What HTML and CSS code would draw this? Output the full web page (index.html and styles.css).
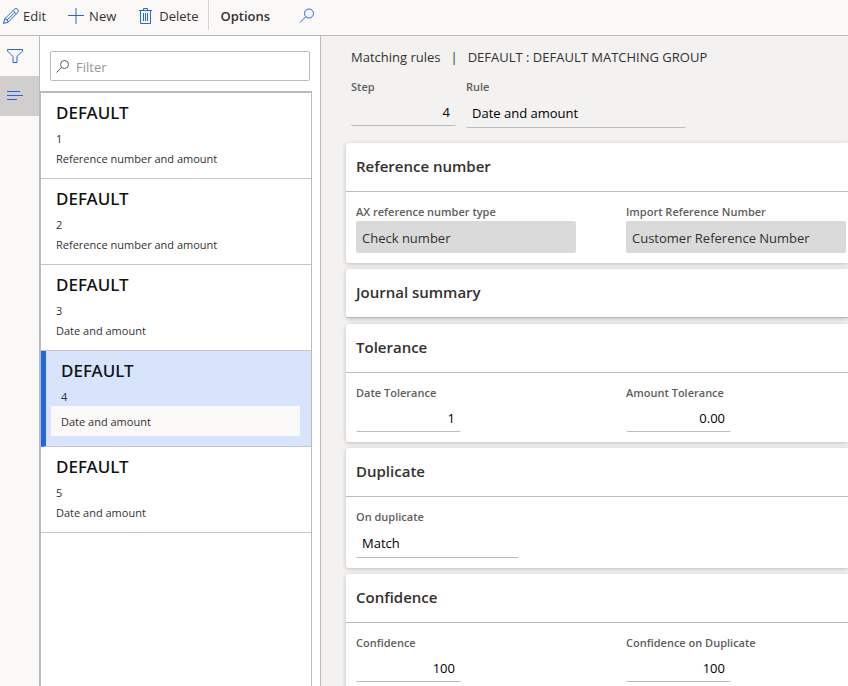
FILE: index.html
```html
<!DOCTYPE html>
<html lang="en">
<head>
<meta charset="utf-8">
<title>Matching rules</title>
<link rel="stylesheet" href="styles.css">
</head>
<body>
<div class="app">
  <header class="toolbar">
    <button class="tool edit" type="button">
      <svg width="18" height="18" viewBox="0 0 18 18"><path d="M1.500 16.500 2.800 11.800 12.300 2.300a2.200 2.200 0 0 1 3.400 3.200L6.200 15.200ZM2.800 11.800c2 .1 3.200 1.300 3.400 3.400M11 3.600l3.300 3.300M13 5.300 4.500 13.500"/></svg>
      <span>Edit</span>
    </button>
    <button class="tool new" type="button">
      <svg width="16" height="16" viewBox="0 0 16 16"><path d="M8 0v16M0 7.500h16"/></svg>
      <span>New</span>
    </button>
    <button class="tool delete" type="button">
      <svg width="13" height="16" viewBox="0 0 13 16"><path d="M0 2.500h13M4.500 2.500v-2h4v2M1.500 2.500v13h10v-13M4.500 5v8M6.500 5v8M8.500 5v8"/></svg>
      <span>Delete</span>
    </button>
    <button class="tool options" type="button">Options</button>
    <button class="tool search" type="button" aria-label="Search">
      <svg width="16" height="16" viewBox="0 0 16 16"><circle cx="10" cy="5.500" r="4.500"/><path d="M6.800 8.700 1 14.500"/></svg>
    </button>
  </header>
  <div class="workspace">
    <nav class="rail">
      <button class="rail-button" type="button" aria-label="Show filters">
        <svg width="16" height="16" viewBox="0 0 16 16"><path d="M.5 1.500h15v1.500l-5.500 5.500v6h-4v-6L.5 3Z"/></svg>
      </button>
      <button class="rail-button selected" type="button" aria-label="Show list">
        <svg width="16" height="16" viewBox="0 0 16 16"><path d="M0 3.500h13M0 7.500h16M0 11.500h10"/></svg>
      </button>
    </nav>
    <aside class="list-pane">
      <label class="filter">
        <svg width="13" height="13" viewBox="0 0 13 13"><circle cx="8.500" cy="4.500" r="4"/><path d="M5.600 7.400.5 12.500"/></svg>
        <input type="text" placeholder="Filter" aria-label="Filter">
      </label>
      <ul class="rules">
        <li class="rule"><strong>DEFAULT</strong><span>1</span><span>Reference number and amount</span></li>
        <li class="rule"><strong>DEFAULT</strong><span>2</span><span>Reference number and amount</span></li>
        <li class="rule"><strong>DEFAULT</strong><span>3</span><span>Date and amount</span></li>
        <li class="rule current"><strong>DEFAULT</strong><span>4</span><span class="active-field">Date and amount</span></li>
        <li class="rule"><strong>DEFAULT</strong><span>5</span><span>Date and amount</span></li>
      </ul>
    </aside>
    <main class="details">
      <h1 class="caption"><span>Matching rules</span><span class="bar">|</span><span>DEFAULT : DEFAULT MATCHING GROUP</span></h1>
      <div class="key-fields">
        <div class="field number"><label for="step">Step</label><input id="step" type="text" value="4"></div>
        <div class="field"><label for="rule">Rule</label><select id="rule"><option>Date and amount</option><option>Reference number and amount</option></select></div>
      </div>
      <section class="card">
        <h2>Reference number</h2>
        <div class="fields">
          <div class="field"><label for="ax">AX reference number type</label><input id="ax" type="text" value="Check number" readonly></div>
          <div class="field"><label for="import">Import Reference Number</label><input id="import" type="text" value="Customer Reference Number" readonly></div>
        </div>
      </section>
      <section class="card">
        <h2>Journal summary</h2>
      </section>
      <section class="card">
        <h2>Tolerance</h2>
        <div class="fields">
          <div class="field"><label for="date-tol">Date Tolerance</label><input id="date-tol" class="numeric" type="text" value="1"></div>
          <div class="field"><label for="amount-tol">Amount Tolerance</label><input id="amount-tol" class="numeric" type="text" value="0.00"></div>
        </div>
      </section>
      <section class="card">
        <h2>Duplicate</h2>
        <div class="fields">
          <div class="field"><label for="on-dup">On duplicate</label><select id="on-dup" class="short"><option>Match</option></select></div>
        </div>
      </section>
      <section class="card">
        <h2>Confidence</h2>
        <div class="fields">
          <div class="field"><label for="conf">Confidence</label><input id="conf" class="numeric" type="text" value="100"></div>
          <div class="field"><label for="conf-dup">Confidence on Duplicate</label><input id="conf-dup" class="numeric" type="text" value="100"></div>
        </div>
      </section>
    </main>
  </div>
</div>
</body>
</html>
```
FILE: styles.css
```css
* { box-sizing: border-box; }

body {
  margin: 0;
  color: #323130;
  font: 13px/20px "Open Sans", "Noto Sans", sans-serif;
}

button, input, select { font: inherit; color: inherit; }

button {
  padding: 0;
  border: 0;
  background: none;
}

svg {
  flex: none;
  fill: none;
  stroke: #2266e3;
  stroke-width: 1;
}

.app {
  display: flex;
  flex-direction: column;
  height: 100vh;
  overflow: hidden;
}

/* Toolbar */
.toolbar {
  display: flex;
  flex: none;
  align-items: flex-start;
  height: 36px;
  padding-left: 2px;
  border-bottom: 1px solid #bdbbb9;
  background: #faf9f8;
}

.tool {
  display: flex;
  align-items: center;
  height: 30px;
  gap: 5px;
  padding-top: 1px;
}

.edit { gap: 3px; }
.new { margin-left: 22px; }
.delete { gap: 7px; margin-left: 23px; }

.options {
  margin-left: 9px;
  padding-left: 12px;
  border-left: 1px solid #d9d7d5;
  font-weight: 600;
}

.search { margin-left: 29px; }

/* Side rail */
.workspace {
  display: flex;
  flex: 1;
  min-height: 0;
}

.rail {
  display: flex;
  flex: none;
  flex-direction: column;
  width: 40px;
  border-right: 1px solid #bdbbb9;
  background: #faf9f8;
}

.rail-button {
  display: flex;
  align-items: center;
  height: 40px;
  padding-left: 7px;
}

.rail-button.selected { background: #d0cfcd; }

/* Rule list */
.list-pane {
  display: flex;
  flex: none;
  flex-direction: column;
  width: 281px;
  border-right: 1px solid #bdbbb9;
  background: #fff;
}

.filter {
  display: flex;
  align-items: center;
  height: 30px;
  margin: 15px 10px 10px;
  padding-left: 5px;
  gap: 7px;
  border: 1px solid #bdbbb9;
  border-radius: 2px;
}

.filter svg { stroke: #605e5c; }

.filter input {
  width: 100%;
  min-width: 0;
  padding: 2px 0 0;
  border: 0;
  outline: 0;
  background: none;
}

.filter input::placeholder { color: #979593; }

.rules {
  flex: 1;
  margin: 0 8px 0 0;
  padding: 0;
  border: 1px solid #bdbbb9;
  border-width: 2px 1px 0;
  list-style: none;
}

.rule {
  display: flex;
  flex-direction: column;
  padding: 8px 15px 9px;
  border-bottom: 1px solid #c8c6c4;
  font-size: 11px;
}

.rule strong {
  margin-bottom: 4px;
  color: #111;
  font-family: "Noto Sans", "Open Sans", sans-serif;
  font-size: 17px;
  font-weight: 500;
  line-height: 24px;
}

.rule.current {
  padding: 8px 11px 10px 15px;
  border-left: 5px solid #2266e3;
  background: #d8e4fc;
}

.rule .active-field {
  margin-left: -10px;
  padding: 6px 10px 4px;
  background: #faf9f8;
}

.rule.current span:not(.active-field) { line-height: 19px; }

/* Detail form */
.details {
  flex: 1;
  min-width: 0;
  padding: 11px 0 0 25px;
  overflow: auto;
  scrollbar-width: none;
  background: #f3f2f1;
}

.caption {
  display: flex;
  gap: 10px;
  margin: 0 0 10px 5px;
  font-size: 13px;
  font-weight: 400;
}

.key-fields {
  display: flex;
  align-items: flex-start;
  gap: 10px;
  margin: 0 0 15px 5px;
}

.field {
  display: flex;
  flex: none;
  flex-direction: column;
  align-items: flex-start;
  width: 220px;
}

.field.number { width: 105px; }

.field label {
  color: #605e5c;
  font-size: 11px;
  font-weight: 600;
  line-height: 19px;
}

.field input, .field select {
  width: 100%;
  height: 32px;
  padding: 2px 6px 0;
  border: 0;
  border-bottom: 1px solid #bdbbb9;
  border-radius: 2px;
  outline: 0;
  background: none;
  color: #000;
  appearance: none;
}

.field input[readonly] {
  border: 0;
  background: #dadada;
  color: #323130;
}

.field.number input, .field .numeric {
  width: 105px;
  height: 30px;
  text-align: right;
}

.field .short { width: 163px; }

.card {
  margin-bottom: 6px;
  border-radius: 3px 0 0 3px;
  background: #fff;
  box-shadow: 0 1px 4px #00000038;
}

.card h2 {
  height: 49px;
  margin: 0;
  padding-left: 10px;
  border-bottom: 1px solid #bdbbb9;
  font-size: 15px;
  font-weight: 600;
  line-height: 46px;
}

.fields {
  display: flex;
  gap: 50px;
  padding: 10px;
}
```
